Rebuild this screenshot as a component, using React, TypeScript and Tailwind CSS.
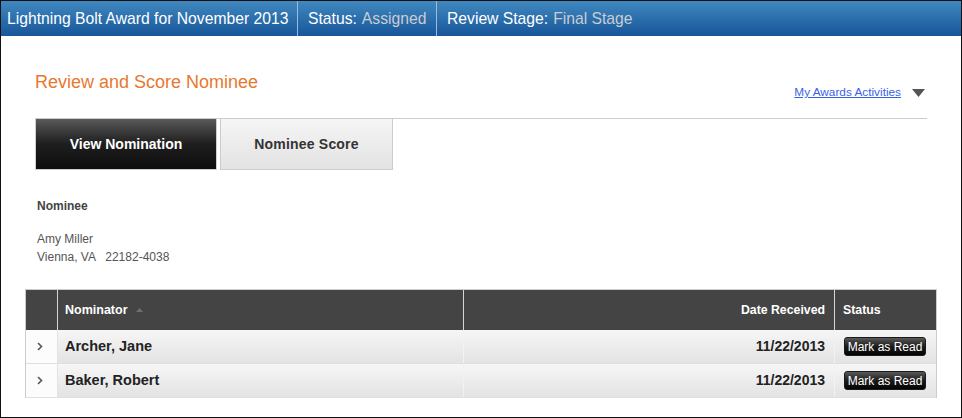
import React from "react";

const rows = [
  { name: "Archer, Jane", date: "11/22/2013" },
  { name: "Baker, Robert", date: "11/22/2013" },
];

const Chevron = () => (
  <svg width="6" height="9" viewBox="0 0 6 9" className="block">
    <path d="M1 1 L4.5 4.5 L1 8" fill="none" stroke="#555" strokeWidth="1.6" />
  </svg>
);

export default function App() {
  return (
    <div
      className="w-[962px] h-[418px] border border-[#111] bg-white flex flex-col overflow-hidden"
      style={{ fontFamily: '"Liberation Sans", Arial, sans-serif' }}
    >
      {/* title bar */}
      <div className="h-[35px] shrink-0 flex items-center text-[15.7px] text-white bg-gradient-to-b from-[#4088bf] to-[#17569a]">
        <div className="w-[297px] h-full flex items-center pl-[6px] border-r border-[#9dbad6]">
          Lightning Bolt Award for November 2013
        </div>
        <div className="w-[139px] h-full flex items-center pl-[10px] border-r border-[#9dbad6]">
          Status:<span className="ml-[5px] text-[#c9cdd2]">Assigned</span>
        </div>
        <div className="h-full flex items-center pl-[10px]">
          Review Stage:<span className="ml-[5px] text-[#c9cdd2]">Final Stage</span>
        </div>
      </div>

      <div className="flex flex-col px-[24px] pt-[35px]">
        <div className="px-[10px]">
          <div className="h-[48px] flex items-start justify-between border-b border-[#cccccc]">
            <h1 className="text-[18px] leading-[22px] text-[#e8782f]">Review and Score Nominee</h1>
            <div className="flex items-center mt-[14px]">
              <a href="#" className="text-[11.8px] leading-[14px] text-[#3b5fe6] underline">
                My Awards Activities
              </a>
              <svg width="13" height="8" viewBox="0 0 13 8" className="ml-[11px] mr-[2px] mt-[1px]">
                <path d="M0 0 H13 L6.5 8 Z" fill="#555" />
              </svg>
            </div>
          </div>

          <div className="flex gap-[3px]">
            <div className="w-[182px] h-[51px] flex items-center justify-center border-x border-b border-[#cfcfcf] bg-gradient-to-b from-[#5a5a5a] via-[#1e1e1e] to-[#0e0e0e] text-white text-[14px] font-bold">
              View Nomination
            </div>
            <div className="w-[173px] h-[51px] flex items-center justify-center border-x border-b border-[#cccccc] bg-gradient-to-b from-[#f5f5f5] to-[#e3e3e3] text-[#333] text-[14px] font-bold tracking-[0.2px]">
              Nominee Score
            </div>
          </div>

          <div className="ml-[2px] mt-[28px] text-[12px] leading-[16px] font-bold text-[#444]">Nominee</div>
          <div className="ml-[2px] mt-[16px] text-[12px] leading-[18px] text-[#555]">
            <div>Amy Miller</div>
            <div className="whitespace-pre">Vienna, VA   22182-4038</div>
          </div>
        </div>

        {/* nominators table */}
        <div className="mt-[23px] border-x border-t border-[#cccccc] text-[12px]">
          <div className="grid grid-cols-[32px_406px_371px_1fr] h-[40px] bg-[#444444] text-white font-bold">
            <div className="border-r border-[#d6d6d6]" />
            <div className="flex items-center pl-[7px] border-r border-[#d6d6d6] text-[12.5px]">
              Nominator
              <svg width="7" height="4" viewBox="0 0 7 4" className="ml-[8px]">
                <path d="M0 4 L3.5 0 L7 4 Z" fill="#6e6e6e" />
              </svg>
            </div>
            <div className="flex items-center justify-end pr-[9px] border-r border-[#d6d6d6] text-[12.3px]">Date Received</div>
            <div className="flex items-center pl-[8px] text-[12.3px]">Status</div>
          </div>
          {rows.map((r) => (
            <div key={r.name} className="grid grid-cols-[32px_406px_371px_1fr] h-[34px] border-b border-[#e0e0e0]">
              <div className="flex items-center justify-center pr-[4px] bg-[#fcfcfc] border-r border-[#e2e2e2]">
                <Chevron />
              </div>
              <div className="flex items-center pl-[7px] bg-gradient-to-b from-[#f6f6f6] to-[#e3e3e3] border-r border-[#f2f2f2] text-[14.5px] font-bold text-[#222]">
                {r.name}
              </div>
              <div className="flex items-center justify-end pr-[9px] bg-gradient-to-b from-[#f6f6f6] to-[#e3e3e3] border-r border-[#f2f2f2] text-[14px] font-bold text-[#222]">
                {r.date}
              </div>
              <div className="flex items-center pl-[9px] bg-gradient-to-b from-[#f6f6f6] to-[#e3e3e3]">
                <button className="w-[82px] h-[19px] rounded-[3px] border border-[#1a1a1a] bg-gradient-to-b from-[#5a5a5a] via-[#1c1c1c] to-[#050505] text-white text-[12px] leading-none">
                  Mark as Read
                </button>
              </div>
            </div>
          ))}
        </div>
      </div>
    </div>
  );
}
